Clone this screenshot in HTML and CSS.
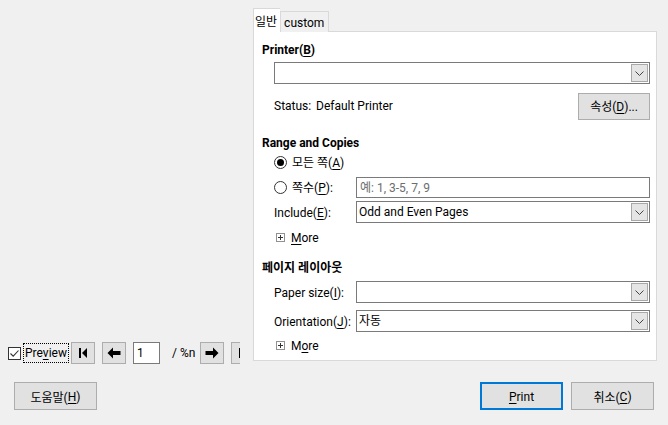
FILE: index.html
```html
<!DOCTYPE html>
<html lang="ko">
<head>
<meta charset="utf-8">
<title>Print</title>
<link rel="stylesheet" href="styles.css">
</head>
<body>
<div class="dialog">
  <div class="top">
    <div class="left">
      <div class="preview-row">
        <div class="check">
          <span class="checkbox"><svg width="11" height="11" viewBox="0 0 11 11"><path d="M1.5 5.5 L4.2 8.2 L9.5 2.5" fill="none" stroke="#333" stroke-width="1.1"/></svg></span>
          <span class="focus">Pre<u>v</u>iew</span>
        </div>
        <div class="nav first"><svg width="12" height="12" viewBox="0 0 12 12"><rect x="2" y="1" width="2" height="10" fill="#000"/><path d="M10 1 L5 6 L10 11 Z" fill="#000"/></svg></div>
        <div class="nav prev"><svg width="14" height="12" viewBox="0 0 14 12"><path d="M0.5 6 L6 0.5 L6 4 L13.5 4 L13.5 8 L6 8 L6 11.5 Z" fill="#000"/></svg></div>
        <div class="page-input">1</div>
        <div class="page-total">/ %n</div>
        <div class="nav next"><svg width="14" height="12" viewBox="0 0 14 12"><path d="M13.5 6 L8 0.5 L8 4 L0.5 4 L0.5 8 L8 8 L8 11.5 Z" fill="#000"/></svg></div>
        <div class="nav last"><svg width="12" height="12" viewBox="0 0 12 12"><rect x="1" y="1" width="2" height="10" fill="#000"/></svg></div>
      </div>
    </div>
    <div class="tabs">
      <div class="tabstrip">
        <div class="tab active">일반</div>
        <div class="tab">custom</div>
      </div>
      <div class="panel">
        <div class="heading h1">Printer(<u>B</u>)</div>
        <div class="row r-printer">
          <div class="combo wide"><span class="val"></span><span class="dd"><svg width="9" height="5" viewBox="0 0 9 5"><path d="M0.5 0.5 L4.5 4.5 L8.5 0.5" fill="none" stroke="#444" stroke-width="1"/></svg></span></div>
        </div>
        <div class="row r-status">
          <span class="status-label">Status:</span><span class="status-val">Default Printer</span>
          <span class="grow"></span>
          <div class="btn props">속성(<u>D</u>)...</div>
        </div>
        <div class="heading h2">Range and Copies</div>
        <div class="row r-radio1">
          <span class="radio on"></span><span class="txt">모든 쪽(<u>A</u>)</span>
        </div>
        <div class="row r-radio2">
          <div class="label"><span class="radio"></span><span class="txt">쪽수(<u>P</u>):</span></div>
          <div class="textbox"><span class="placeholder">예: 1, 3-5, 7, 9</span></div>
        </div>
        <div class="row r-include">
          <div class="label">Include(<u>E</u>):</div>
          <div class="combo"><span class="val">Odd and Even Pages</span><span class="dd"><svg width="9" height="5" viewBox="0 0 9 5"><path d="M0.5 0.5 L4.5 4.5 L8.5 0.5" fill="none" stroke="#444" stroke-width="1"/></svg></span></div>
        </div>
        <div class="row r-more1">
          <span class="expander"></span><span class="txt"><u>M</u>ore</span>
        </div>
        <div class="heading h3">페이지 레이아웃</div>
        <div class="row r-paper">
          <div class="label">Paper size(<u>I</u>):</div>
          <div class="combo"><span class="val"></span><span class="dd"><svg width="9" height="5" viewBox="0 0 9 5"><path d="M0.5 0.5 L4.5 4.5 L8.5 0.5" fill="none" stroke="#444" stroke-width="1"/></svg></span></div>
        </div>
        <div class="row r-orient">
          <div class="label">Orientation(<u>J</u>):</div>
          <div class="combo"><span class="val">자동</span><span class="dd"><svg width="9" height="5" viewBox="0 0 9 5"><path d="M0.5 0.5 L4.5 4.5 L8.5 0.5" fill="none" stroke="#444" stroke-width="1"/></svg></span></div>
        </div>
        <div class="row r-more2">
          <span class="expander"></span><span class="txt">M<u>o</u>re</span>
        </div>
      </div>
    </div>
  </div>
  <div class="bottom">
    <div class="btn big">도움말(<u>H</u>)</div>
    <span class="grow"></span>
    <div class="btn big default"><u>P</u>rint</div>
    <div class="btn big">취소(<u>C</u>)</div>
  </div>
</div>
</body>
</html>
```
FILE: styles.css
```css
html, body {
  margin: 0;
  padding: 0;
}
body {
  background: #f0f0f0;
  font-family: Roboto, "Noto Sans CJK KR", sans-serif;
  font-size: 12px;
  color: #000;
  width: 668px;
  height: 425px;
  overflow: hidden;
}
u { text-decoration: underline; text-underline-offset: 2px; }

.dialog {
  display: flex;
  flex-direction: column;
  height: 425px;
}
.top {
  display: flex;
  align-items: flex-end;
  padding: 8px 11px 0 8px;
}
.left {
  width: 232px;
  margin-right: 13px;
  overflow: hidden;
  margin-bottom: -3px;
}
.preview-row {
  display: flex;
  align-items: center;
  height: 22px;
  white-space: nowrap;
}
.check {
  display: flex;
  align-items: center;
  flex: none;
}
.checkbox {
  width: 11px;
  height: 11px;
  border: 1px solid #333;
  background: #fff;
  display: flex;
  flex: none;
}
.focus {
  margin-left: 3px;
  outline: 1px dotted #000;
  outline-offset: 0;
  width: 42px;
  padding: 0 1px;
  height: 18px;
  line-height: 19px;
  overflow: hidden;
}
.nav {
  flex: none;
  width: 22px;
  height: 20px;
  background: #e1e1e1;
  border: 1px solid #adadad;
  display: flex;
  align-items: center;
  justify-content: center;
}
.nav.first { margin-left: 3px; }
.nav.prev { margin-left: 7px; }
.nav.next { margin-left: 0; }
.nav.last { margin-left: 7px; justify-content: flex-start; padding-left: 6px; width: 16px; }
.page-input {
  flex: none;
  margin-left: 7px;
  width: 22px;
  height: 20px;
  line-height: 21px;
  padding-left: 3px;
  background: #fff;
  border: 1px solid #7a7a7a;
}
.page-total {
  flex: none;
  margin-left: 12px;
  width: 28px;
  line-height: 24px;
}

.tabs {
  width: 404px;
  display: flex;
  flex-direction: column;
}
.tabstrip {
  display: flex;
  align-items: flex-end;
  height: 24px;
  margin-bottom: -1px;
  position: relative;
  z-index: 1;
}
.tab {
  height: 20px;
  line-height: 20px;
  padding: 1px 4px 0 3px;
  box-sizing: border-box;
  height: 21px;
  border: 1px solid #d9d9d9;
  border-bottom: none;
  background: #f0f0f0;
}
.tab.active {
  height: 24px;
  line-height: 21px;
  padding: 3px 3px 0 1px;
  background: #fff;
  border-right: none;
}
.panel {
  background: #fff;
  border: 1px solid #d9d9d9;
  height: 328px;
  padding: 0 6px 0 8px;
  display: flex;
  flex-direction: column;
}
.heading {
  font-weight: 700;
  height: 20px;
  line-height: 22px;
}
.h1 { margin-top: 7px; }
.h2 { margin-top: 13px; }
.h3 { margin-top: 10px; }
.row {
  display: flex;
  align-items: center;
  margin-left: 12px;
  white-space: nowrap;
  line-height: 22px;
}
.r-printer { margin-top: 3px; height: 22px; }
.r-status { margin-top: 8px; height: 27px; padding-top: 1px; box-sizing: border-box; }
.r-radio1 { height: 20px; }
.r-radio2 { margin-top: 5px; height: 20px; }
.r-include { margin-top: 4px; height: 22px; }
.r-more1 { margin-top: 4px; height: 20px; }
.r-paper { margin-top: 4px; height: 22px; }
.r-orient { margin-top: 7px; height: 22px; }
.r-more2 { margin-top: 3px; height: 20px; }
.txt { padding-top: 1px; }

.status-label { width: 42px; }
.grow { flex: 1; }
.label {
  width: 82px;
  flex: none;
  display: flex;
  align-items: center;
  padding-top: 1px;
}
.combo {
  flex: 1;
  height: 20px;
  border: 1px solid #7a7a7a;
  background: #fff;
  display: flex;
  align-items: stretch;
}
.combo .val {
  flex: 1;
  padding-left: 2px;
  line-height: 21px;
}
.dd {
  width: 15px;
  margin: 1px;
  border: 1px solid #a8a8a8;
  background: #e5e5e5;
  display: flex;
  align-items: center;
  justify-content: center;
}
.textbox {
  flex: 1;
  height: 19px;
  border: 1px solid #7a7a7a;
  background: #fff;
  line-height: 20px;
  padding-left: 3px;
}
.placeholder { color: #6d6d6d; }
.radio {
  width: 11px;
  height: 11px;
  border: 1px solid #333;
  border-radius: 50%;
  background: #fff;
  margin-right: 5px;
  display: flex;
  align-items: center;
  justify-content: center;
  flex: none;
}
.radio.on::after {
  content: "";
  width: 7px;
  height: 7px;
  border-radius: 50%;
  background: #000;
}
.expander {
  width: 7px;
  height: 7px;
  border: 1px solid #919191;
  margin: 0 6px 0 2px;
  background:
    linear-gradient(#333, #333) center / 5px 1px no-repeat,
    linear-gradient(#333, #333) center / 1px 5px no-repeat;
}
.btn {
  background: #e1e1e1;
  border: 1px solid #adadad;
  display: flex;
  align-items: center;
  justify-content: center;
  white-space: nowrap;
  padding-top: 1px;
  box-sizing: border-box;
}
.btn.props {
  width: 72px;
  height: 27px;
}
.bottom {
  display: flex;
  margin-top: 21px;
  padding: 0 14px;
}
.btn.big {
  width: 83px;
  height: 28px;
}
.btn.default {
  border: 2px solid #0078d7;
  margin-right: 8px;
}
```
